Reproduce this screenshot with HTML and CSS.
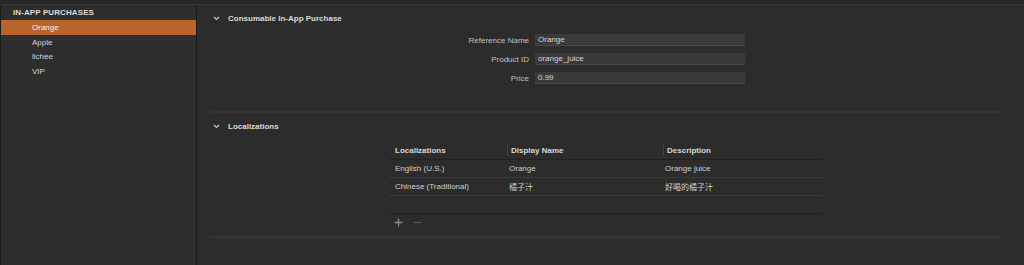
FILE: index.html
```html
<!DOCTYPE html>
<html>
<head>
<meta charset="utf-8">
<link rel="stylesheet" href="styles.css">
</head>
<body>
<div class="topbar"></div>
<div class="app">
  <aside class="sidebar">
    <div class="side-head">IN-APP PURCHASES</div>
    <div class="side-item selected">Orange</div>
    <div class="side-item">Apple</div>
    <div class="side-item">lichee</div>
    <div class="side-item">VIP</div>
  </aside>
  <main class="main">
    <div class="sec-head">
      <svg class="chev" width="7" height="5" viewBox="0 0 7 5"><path d="M1 1 L3.5 3.5 L6 1" fill="none" stroke="#c4c4c4" stroke-width="1.2"/></svg>
      <span>Consumable In-App Purchase</span>
    </div>
    <div class="form">
      <label class="lbl">Reference Name</label><div class="field">Orange</div>
      <label class="lbl">Product ID</label><div class="field">orange_juice</div>
      <label class="lbl">Price</label><div class="field">0.99</div>
    </div>
    <div class="divider"></div>
    <div class="sec-head">
      <svg class="chev" width="7" height="5" viewBox="0 0 7 5"><path d="M1 1 L3.5 3.5 L6 1" fill="none" stroke="#c4c4c4" stroke-width="1.2"/></svg>
      <span>Localizations</span>
    </div>
    <div class="table">
      <div class="row head">
        <div class="c c1">Localizations</div>
        <div class="c c2">Display Name</div>
        <div class="c c3">Description</div>
      </div>
      <div class="row">
        <div class="c c1">English (U.S.)</div>
        <div class="c c2">Orange</div>
        <div class="c c3">Orange juice</div>
      </div>
      <div class="row">
        <div class="c c1">Chinese (Traditional)</div>
        <div class="c c2 cjk">橘子汁</div>
        <div class="c c3 cjk">好喝的橘子汁</div>
      </div>
      <div class="row empty"></div>
      <div class="tools">
        <svg class="plus" width="9" height="9" viewBox="0 0 9 9"><path d="M4.5 0.5 V8.5 M0.5 4.5 H8.5" stroke="#8c8c8c" stroke-width="1.3"/></svg>
        <svg class="minus" width="9" height="9" viewBox="0 0 9 9"><path d="M0.5 4.5 H8.5" stroke="#555" stroke-width="1.3"/></svg>
      </div>
    </div>
    <div class="divider bottom"></div>
  </main>
</div>
</body>
</html>
```
FILE: styles.css
```css
* { box-sizing: border-box; }
html, body { margin: 0; padding: 0; }
body {
  width: 1024px;
  height: 265px;
  overflow: hidden;
  background: #2c2c2c;
  font-family: "Liberation Sans", Arial, "Noto Sans CJK TC", sans-serif;
  font-size: 8px;
  color: #d2d2d2;
}
.topbar {
  height: 5px;
  background: #272727;
  border-bottom: 1px solid #363636;
}
.app {
  display: flex;
  height: 260px;
}
.sidebar {
  width: 197px;
  background: #2e2e2e;
  border-left: 1px solid #1c1c1c;
  border-right: 1px solid #1c1c1c;
  flex: none;
}
.side-head {
  height: 15px;
  line-height: 16px;
  padding-left: 12px;
  font-weight: bold;
  color: #dcdcdc;
  letter-spacing: 0.1px;
}
.side-item {
  height: 14.5px;
  line-height: 15px;
  padding-left: 31px;
  color: #d4d4d4;
}
.side-item.selected {
  background: #b7652a;
  color: #f2f2f2;
}
.main {
  flex: 1;
  padding: 0 23px 0 13px;
  background: #2c2c2c;
}
.sec-head {
  height: 26px;
  display: flex;
  align-items: center;
  gap: 8px;
  padding-left: 3px;
  font-weight: bold;
  color: #dadada;
}
.chev { flex: none; }
.form {
  display: grid;
  grid-template-columns: 319px 210px;
  column-gap: 6px;
  row-gap: 7px;
  margin-top: 3px;
  align-items: center;
}
.lbl {
  text-align: right;
  color: #c2c2c2;
}
.field {
  height: 12px;
  line-height: 12px;
  background: #3a3a3a;
  border-bottom: 1px solid #484848;
  padding-left: 3px;
  color: #d6d6d6;
}
.divider {
  margin-top: 27px;
  height: 2px;
  background: #353535;
}
.divider.bottom {
  margin-top: 5px;
}
.table {
  margin-left: 179px;
  width: 433px;
  margin-top: 2px;
}
.row {
  display: grid;
  grid-template-columns: 118px 156px 159px;
  height: 18px;
  border-bottom: 1px solid #3b3b3b;
  align-items: center;
}
.row.head {
  height: 19px;
  border-bottom-color: #202020;
}
.row.head .c {
  font-weight: bold;
  color: #d8d8d8;
}
.row.head .c2, .row.head .c3 {
  border-left: 1px solid #454545;
  padding-left: 3px;
  height: 11px;
  line-height: 11px;
}
.c {
  white-space: nowrap;
  color: #cfcfcf;
}
.c1 { padding-left: 6px; }
.c2, .c3 { padding-left: 2px; }
.cjk { font-family: "Noto Sans CJK TC", sans-serif; font-size: 8px; }
.row.empty { border-bottom-color: #1f1f1f; }
.tools {
  height: 17px;
  display: flex;
  align-items: center;
  gap: 10px;
  padding-left: 5px;
}
```
